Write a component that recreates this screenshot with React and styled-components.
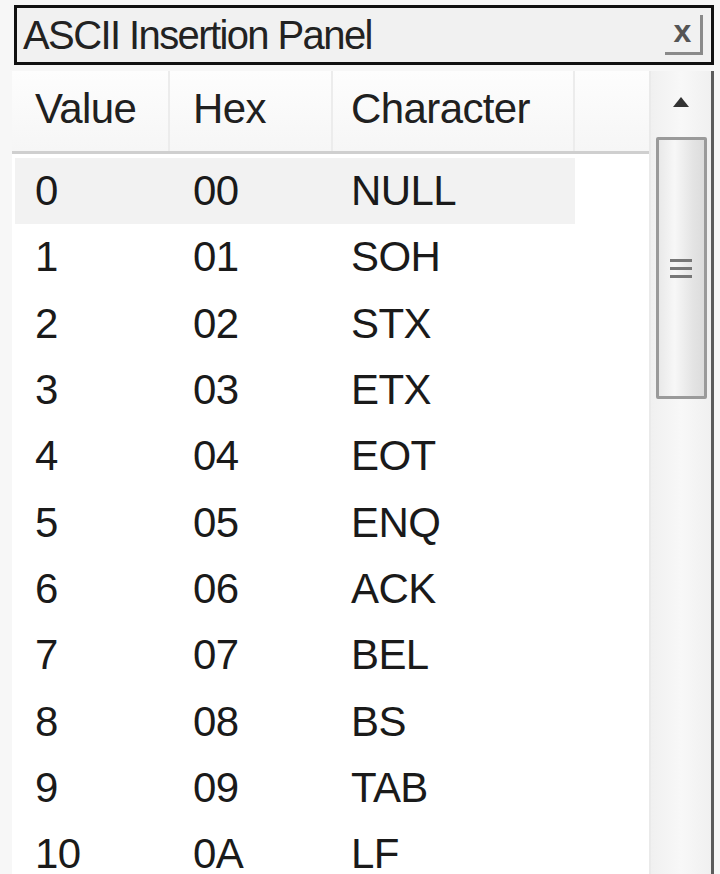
import React from 'react';
import styled, { createGlobalStyle } from 'styled-components';

const GlobalStyle = createGlobalStyle`
  html, body {
    margin: 0;
    padding: 0;
    background: #f7f7f7;
  }
  body {
    font-family: "Liberation Sans", Arial, sans-serif;
    color: #1c1c1c;
  }
`;

const Panel = styled.div`
  width: 720px;
  height: 874px;
  overflow: hidden;
  padding: 5px 6px 0 12px;
  box-sizing: border-box;
  display: flex;
  flex-direction: column;
`;

const TitleBar = styled.div`
  flex-shrink: 0;
  height: 60px;
  margin-left: 2px;
  border: 3px solid #111;
  box-sizing: border-box;
  background: #f1f1f1;
  display: flex;
  align-items: center;
  justify-content: space-between;
  padding: 0 8px 0 6px;
`;

const Title = styled.span`
  font-size: 40px;
  color: #222;
  letter-spacing: -1.6px;
`;

const CloseButton = styled.div`
  width: 38px;
  height: 40px;
  display: flex;
  align-items: center;
  justify-content: center;
  border-right: 3px solid #8a8a8a;
  border-bottom: 3px solid #8a8a8a;
  box-sizing: border-box;
  font-size: 32px;
  font-weight: bold;
  color: #555;
  line-height: 1;
  padding-bottom: 6px;
`;

const Body = styled.div`
  flex: 1;
  min-height: 0;
  display: flex;
  margin-top: 6px;
  border-right: 3px solid #5c5c5c;
  background: #fff;
`;

const List = styled.div`
  flex: 1;
  display: flex;
  flex-direction: column;
`;

const Grid = styled.div`
  display: grid;
  grid-template-columns: 158px 163px 242px 1fr;
`;

const HeaderRow = styled(Grid)`
  flex-shrink: 0;
  height: 80px;
  border-bottom: 3px solid #cfcfcf;
  background: linear-gradient(#fdfdfd, #f6f6f6);
`;

const HeaderCell = styled.div`
  display: flex;
  align-items: center;
  padding-left: ${({ pad }) => pad}px;
  border-right: ${({ last }) => (last ? 'none' : '2px solid #ececec')};
  font-size: 42px;
  letter-spacing: -0.6px;
  color: #202020;
  padding-bottom: 4px;
`;

const Rows = styled.div`
  padding-top: 4px;
`;

const Row = styled(Grid)`
  height: 66.3px;
  background: ${({ selected }) => (selected ? '#f2f2f2' : 'transparent')};
  margin-left: 3px;
  grid-template-columns: 155px 163px 242px 1fr;
`;

const Cell = styled.div`
  display: flex;
  align-items: center;
  padding-left: ${({ pad }) => pad}px;
  font-size: 42px;
  line-height: 1;
  letter-spacing: -0.6px;
  color: #1a1a1a;
  background: ${({ blank }) => (blank ? '#fff' : 'transparent')};
`;

const Scrollbar = styled.div`
  width: 60px;
  display: flex;
  flex-direction: column;
  align-items: center;
  background: linear-gradient(90deg, #f0f0f0, #f8f8f8 50%, #f0f0f0);
  border-left: 2px solid #eaeaea;
`;

const ArrowButton = styled.div`
  height: 66px;
  width: 100%;
  display: flex;
  align-items: center;
  justify-content: center;
  padding-bottom: 4px;
  box-sizing: border-box;
`;

const Thumb = styled.div`
  width: 51px;
  height: 262px;
  box-sizing: border-box;
  border: 3px solid #9a9a9a;
  border-radius: 2px;
  background: linear-gradient(90deg, #e9e9e9, #f7f7f7 35%, #e4e4e4 75%, #dcdcdc);
  display: flex;
  flex-direction: column;
  align-items: center;
  justify-content: center;
  gap: 5px;
`;

const Grip = styled.div`
  width: 22px;
  height: 3px;
  background: #777;
`;

const rows = [
  ['0', '00', 'NULL'],
  ['1', '01', 'SOH'],
  ['2', '02', 'STX'],
  ['3', '03', 'ETX'],
  ['4', '04', 'EOT'],
  ['5', '05', 'ENQ'],
  ['6', '06', 'ACK'],
  ['7', '07', 'BEL'],
  ['8', '08', 'BS'],
  ['9', '09', 'TAB'],
  ['10', '0A', 'LF'],
];

export default function App() {
  return (
    <>
      <GlobalStyle />
      <Panel>
        <TitleBar>
          <Title>ASCII Insertion Panel</Title>
          <CloseButton>x</CloseButton>
        </TitleBar>
        <Body>
          <List>
            <HeaderRow>
              <HeaderCell pad={23}>Value</HeaderCell>
              <HeaderCell pad={23}>Hex</HeaderCell>
              <HeaderCell pad={18}>Character</HeaderCell>
              <HeaderCell last />
            </HeaderRow>
            <Rows>
              {rows.map(([v, h, c], i) => (
                <Row key={v} selected={i === 0}>
                  <Cell pad={20}>{v}</Cell>
                  <Cell pad={23}>{h}</Cell>
                  <Cell pad={18}>{c}</Cell>
                  <Cell blank />
                </Row>
              ))}
            </Rows>
          </List>
          <Scrollbar>
            <ArrowButton>
              <svg width="18" height="12" viewBox="0 0 18 12">
                <path d="M9 1 L17 11 L1 11 Z" fill="#333" />
              </svg>
            </ArrowButton>
            <Thumb>
              <Grip />
              <Grip />
              <Grip />
            </Thumb>
          </Scrollbar>
        </Body>
      </Panel>
    </>
  );
}
